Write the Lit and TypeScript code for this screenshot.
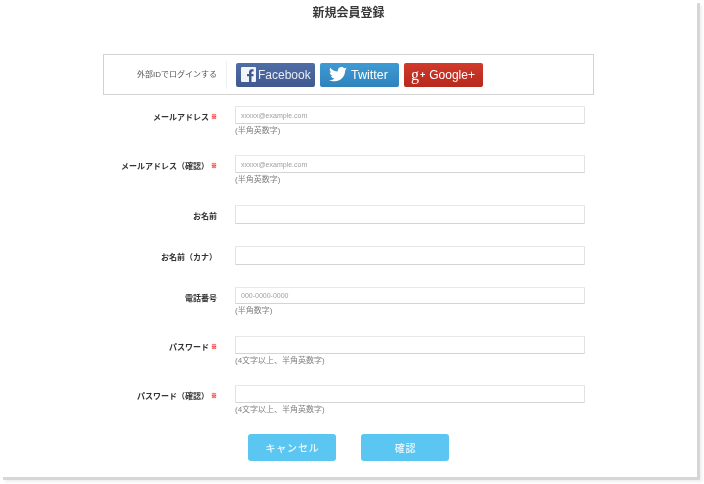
import { LitElement, html, css } from "lit";
import { customElement } from "lit/decorators.js";

type Row = { label: string; req?: boolean; ph?: string; note?: string; h: number; gap: number };

const ROWS: Row[] = [
  { label: "メールアドレス", req: true, ph: "xxxxx@example.com", note: "(半角英数字)", h: 18, gap: 17 },
  { label: "メールアドレス（確認）", req: true, ph: "xxxxx@example.com", note: "(半角英数字)", h: 18, gap: 18 },
  { label: "お名前", h: 19, gap: 21 },
  { label: "お名前（カナ）", h: 19, gap: 21 },
  { label: "電話番号", ph: "000-0000-0000", note: "(半角数字)", h: 17, gap: 18 },
  { label: "パスワード", req: true, note: "(4文字以上、半角英数字)", h: 18, gap: 17 },
  { label: "パスワード（確認）", req: true, note: "(4文字以上、半角英数字)", h: 18, gap: 17 },
];

@customElement("app-root")
export class AppRoot extends LitElement {
  static styles = css`
    :host {
      display: block;
      width: 704px;
      height: 484px;
      overflow: hidden;
      background: #fff;
      font-family: "Liberation Sans", "Noto Sans CJK JP", sans-serif;
    }
    .panel {
      box-sizing: border-box;
      width: 697px;
      height: 477px;
      background: #fff;
      box-shadow: 3px 3px 0 #d6d6d6, 5px 5px 3px #efefef;
      padding: 5px 103px 0;
      filter: blur(0.4px);
    }
    h1 {
      margin: 0;
      height: 49px;
      font-size: 12px;
      line-height: 16px;
      font-weight: 700;
      color: #3a3a3a;
      text-align: center;
    }
    .social {
      box-sizing: border-box;
      width: 491px;
      height: 41px;
      border: 1px solid #d2d2d2;
      display: flex;
      align-items: center;
      margin-bottom: 11px;
    }
    .social-label {
      box-sizing: border-box;
      width: 123px;
      height: 28px;
      line-height: 27px;
      border-right: 1px solid #eee;
      font-size: 8px;
      color: #555;
      text-align: right;
      padding-right: 9px;
    }
    .sns {
      display: flex;
      gap: 5px;
      margin-left: 9px;
    }
    .sns-btn {
      box-sizing: border-box;
      width: 79px;
      height: 24px;
      border-radius: 2px;
      display: flex;
      align-items: center;
      color: #fff;
      font-size: 12px;
      padding-left: 5px;
    }
    .fb { background: linear-gradient(#4f6ea6, #40598f); color: #e8ecf4; gap: 2px; }
    .tw { background: linear-gradient(#3f9ad3, #2f83bd); padding-left: 9px; gap: 4px; font-size: 12.5px; }
    .gp { background: linear-gradient(#d03a2c, #b8281c); padding-left: 7px; gap: 4px; }
    .gp-icon {
      display: flex;
      align-items: center;
      font-family: "Liberation Serif", serif;
      font-size: 16px;
      line-height: 20px;
    }
    .gp-plus {
      font-family: "Liberation Sans", sans-serif;
      font-size: 9px;
      font-weight: 700;
      margin-left: 1px;
    }
    .row {
      display: grid;
      grid-template-columns: 114px 350px;
      column-gap: 18px;
      align-items: start;
    }
    .label {
      display: flex;
      justify-content: flex-end;
      align-items: center;
      gap: 2px;
      font-size: 8px;
      font-weight: 700;
      color: #333;
      height: 20px;
      white-space: nowrap;
    }
    .star {
      color: #f01f1f;
      font-size: 6px;
      font-weight: 700;
      line-height: 8px;
      margin-top: 2px;
      text-shadow: 0 0 1px #f01f1f, 0 0 1px #f01f1f;
    }
    .input {
      box-sizing: border-box;
      width: 350px;
      border: 1px solid #e2e2e2;
      border-top-color: #e8e8e8;
      border-bottom-color: #d4d4d4;
      border-radius: 1px;
      font-size: 7px;
      color: #a0a0a0;
      padding-left: 5px;
      display: flex;
      align-items: center;
    }
    .note {
      padding-bottom: 1px;
      font-size: 8px;
      line-height: 13px;
      color: #808080;
      white-space: nowrap;
    }
    .actions {
      display: flex;
      gap: 25px;
      padding-left: 145px;
    }
    .btn {
      box-sizing: border-box;
      width: 88px;
      height: 27px;
      padding-left: 1px;
      border-radius: 3px;
      background: #5bc6f2;
      color: #eaf8fe;
      font-size: 10px;
      font-weight: 500;
      letter-spacing: 0.8px;
      display: flex;
      align-items: center;
      justify-content: center;
    }
  `;

  private row(r: Row) {
    return html`
      <div class="row" style="margin-bottom:${r.gap}px">
        <div class="label">
          <span>${r.label}</span>
          ${r.req ? html`<span class="star">※</span>` : ""}
        </div>
        <div>
          <div class="input" style="height:${r.h}px">${r.ph ?? ""}</div>
          ${r.note ? html`<div class="note">${r.note}</div>` : ""}
        </div>
      </div>
    `;
  }

  render() {
    return html`
      <div class="panel">
        <h1>新規会員登録</h1>
        <div class="social">
          <div class="social-label">外部IDでログインする</div>
          <div class="sns">
            <div class="sns-btn fb">
              <svg width="15" height="15" viewBox="0 0 15 15">
                <rect width="15" height="15" rx="1" fill="#f2f4f8" />
                <path fill="#40598f" d="M10.500 15V9.300h2V6.900h-2V5.600c0-.7.3-1.100 1.100-1.100h1V2.300c-.5-.1-1.100-.1-1.700-.1-1.800 0-2.900 1.100-2.900 3.100v1.600H6v2.400h2V15z" />
              </svg>
              <span>Facebook</span>
            </div>
            <div class="sns-btn tw">
              <svg width="18" height="15" viewBox="0 0 24 20">
                <path fill="#fff" d="M24 2.400c-.9.400-1.800.7-2.800.8 1-.6 1.800-1.600 2.200-2.700-1 .6-2 1-3.100 1.200C19.300.7 18 0 16.600 0c-2.700 0-4.900 2.200-4.900 4.900 0 .4 0 .8.100 1.100C7.700 5.800 4.100 3.900 1.700.9c-.4.700-.7 1.600-.7 2.500 0 1.700.9 3.200 2.200 4.100-.8 0-1.600-.2-2.200-.6v.1c0 2.400 1.700 4.400 3.900 4.800-.4.100-.8.200-1.300.2-.3 0-.6 0-.9-.1.6 2 2.400 3.400 4.600 3.400-1.700 1.300-3.800 2.100-6.100 2.100-.4 0-.8 0-1.200-.1C2.200 18.300 4.800 19.100 7.500 19.100c9.100 0 14-7.500 14-14v-.6c1-.7 1.800-1.500 2.500-2.100z" />
              </svg>
              <span>Twitter</span>
            </div>
            <div class="sns-btn gp">
              <span class="gp-icon">g<span class="gp-plus">+</span></span>
              <span>Google+</span>
            </div>
          </div>
        </div>
        ${ROWS.map((r) => this.row(r))}
        <div class="actions">
          <div class="btn">キャンセル</div>
          <div class="btn">確認</div>
        </div>
      </div>
    `;
  }
}
